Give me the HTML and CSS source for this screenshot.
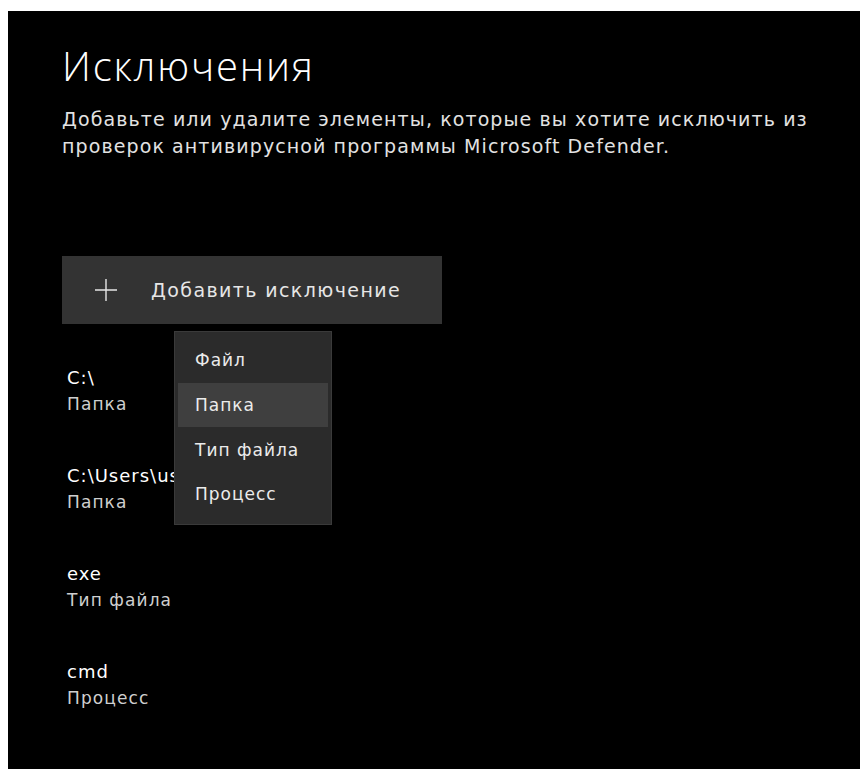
FILE: index.html
```html
<!DOCTYPE html>
<html lang="ru">
<head>
<meta charset="utf-8">
<title>Исключения</title>
<link rel="stylesheet" href="styles.css">
</head>
<body>
<main class="panel">
  <h1 class="title">Исключения</h1>
  <p class="desc">Добавьте или удалите элементы, которые вы хотите исключить из<br>проверок антивирусной программы Microsoft Defender.</p>

  <div class="add">
    <button class="add-btn" type="button">
      <svg class="plus" width="22" height="22" viewBox="0 0 22 22" aria-hidden="true">
        <path d="M11 0V22M0 11H22" stroke="#e6e6e6" stroke-width="1.4" fill="none"/>
      </svg>
      <span>Добавить исключение</span>
    </button>
    <ul class="menu">
      <li class="menu-item">Файл</li>
      <li class="menu-item is-hover">Папка</li>
      <li class="menu-item">Тип файла</li>
      <li class="menu-item">Процесс</li>
    </ul>
  </div>

  <ul class="list">
    <li class="entry"><div class="entry-name">C:\</div><div class="entry-type">Папка</div></li>
    <li class="entry"><div class="entry-name">C:\Users\user</div><div class="entry-type">Папка</div></li>
    <li class="entry"><div class="entry-name">exe</div><div class="entry-type">Тип файла</div></li>
    <li class="entry"><div class="entry-name">cmd</div><div class="entry-type">Процесс</div></li>
  </ul>
</main>
</body>
</html>
```
FILE: styles.css
```css
html, body {
  margin: 0;
  background: #fff;
}

.panel {
  margin: 11px 0 0 8px;
  min-height: 758px;
  box-sizing: border-box;
  padding: 0 0 0 54px;
  background: #000;
  color: #fff;
  font-family: "DejaVu Sans", "Open Sans", sans-serif;
  overflow: hidden;
}

.title {
  margin: 31px 0 0;
  font-family: "Open Sans", "Noto Sans", sans-serif;
  font-size: 40px;
  font-weight: 300;
  letter-spacing: 1.8px;
  line-height: 48px;
  color: #fff;
}

.desc {
  margin: 16px 0 0;
  font-size: 19px;
  letter-spacing: 1.1px;
  line-height: 27px;
  color: #e2e2e2;
}

.add {
  position: relative;
  margin-top: 96px;
  width: 380px;
}

.add-btn {
  display: flex;
  align-items: center;
  gap: 34px;
  width: 380px;
  height: 68px;
  padding: 0 0 0 33px;
  border: 0;
  background: #333;
  color: #e6e6e6;
  font: inherit;
  font-size: 19px;
  letter-spacing: 1.4px;
  cursor: pointer;
}

.plus {
  flex: none;
}

/* flyout menu shown under the button */
.menu {
  position: absolute;
  left: 112px;
  top: 75px;
  z-index: 2;
  width: 158px;
  box-sizing: border-box;
  margin: 0;
  padding: 6px 3px 7px;
  list-style: none;
  background: #2b2b2b;
  border: 1px solid #3a3a3a;
}

.menu-item {
  height: 44.7px;
  display: flex;
  align-items: center;
  padding-left: 17px;
  font-size: 17px;
  letter-spacing: 1px;
  color: #ebebeb;
}

.menu-item.is-hover {
  background: #3f3f3f;
}

.list {
  margin: 41px 0 0;
  padding: 0 0 0 5px;
  list-style: none;
}

.entry {
  margin-bottom: 46px;
  white-space: nowrap;
}

.entry-name {
  font-size: 18px;
  letter-spacing: 1px;
  line-height: 26px;
  color: #fff;
}

.entry-type {
  font-size: 17px;
  letter-spacing: 1.1px;
  line-height: 26px;
  color: #cfcfcf;
}
```
